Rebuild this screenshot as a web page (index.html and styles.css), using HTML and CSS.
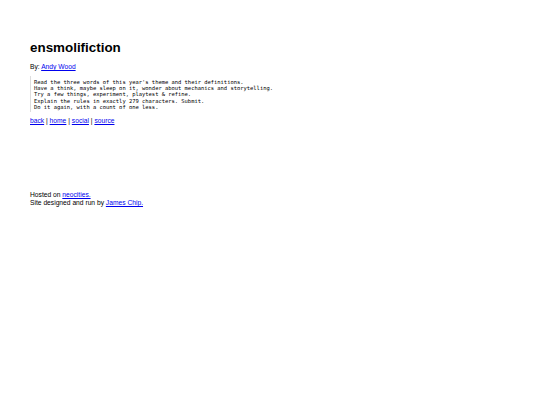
FILE: index.html
```html
<!DOCTYPE html>
<html>
<head>
<meta charset="utf-8">
<title>ensmolifiction</title>
<link rel="stylesheet" href="styles.css">
</head>
<body>
<main class="page">
  <h1 class="title">ensmolifiction</h1>
  <p class="byline">By: <a href="#">Andy Wood</a></p>
  <pre class="rules">Read the three words of this year's theme and their definitions.
Have a think, maybe sleep on it, wonder about mechanics and storytelling.
Try a few things, experiment, playtest &amp; refine.
Explain the rules in exactly 279 characters. Submit.
Do it again, with a count of one less.</pre>
  <p class="nav"><a href="#">back</a> | <a href="#">home</a> | <a href="#">social</a> | <a href="#">source</a></p>
  <footer class="footer">
    <p class="foot-line">Hosted on <a href="#">neocities.</a></p>
    <p class="foot-line">Site designed and run by <a href="#">James Chip.</a></p>
  </footer>
</main>
</body>
</html>
```
FILE: styles.css
```css
html, body {
  margin: 0;
  background: #fff;
}
body {
  font-family: "Liberation Sans", Arial, sans-serif;
  font-size: 6.7px;
  line-height: 7.7px;
  color: #000;
}
.page {
  padding: 40px 30px 20px 30px;
}
a {
  color: #0000ee;
  text-decoration: underline;
}
.title {
  margin: 0;
  font-size: 13.4px;
  line-height: 16px;
  font-weight: bold;
}
.byline {
  margin: 7px 0 0 0;
}
.rules {
  margin: 5px 0 0 0;
  padding: 3px 0 2px 3px;
  border-left: 1px solid #ddd;
  font-family: "DejaVu Sans Mono", monospace;
  font-size: 5.45px;
  line-height: 6.3px;
}
.nav {
  margin: 5px 0 0 0;
}
.footer {
  margin-top: 66px;
  padding-bottom: 4px;
}
.foot-line {
  margin: 0;
  height: 8px;
  line-height: 8px;
}
```
